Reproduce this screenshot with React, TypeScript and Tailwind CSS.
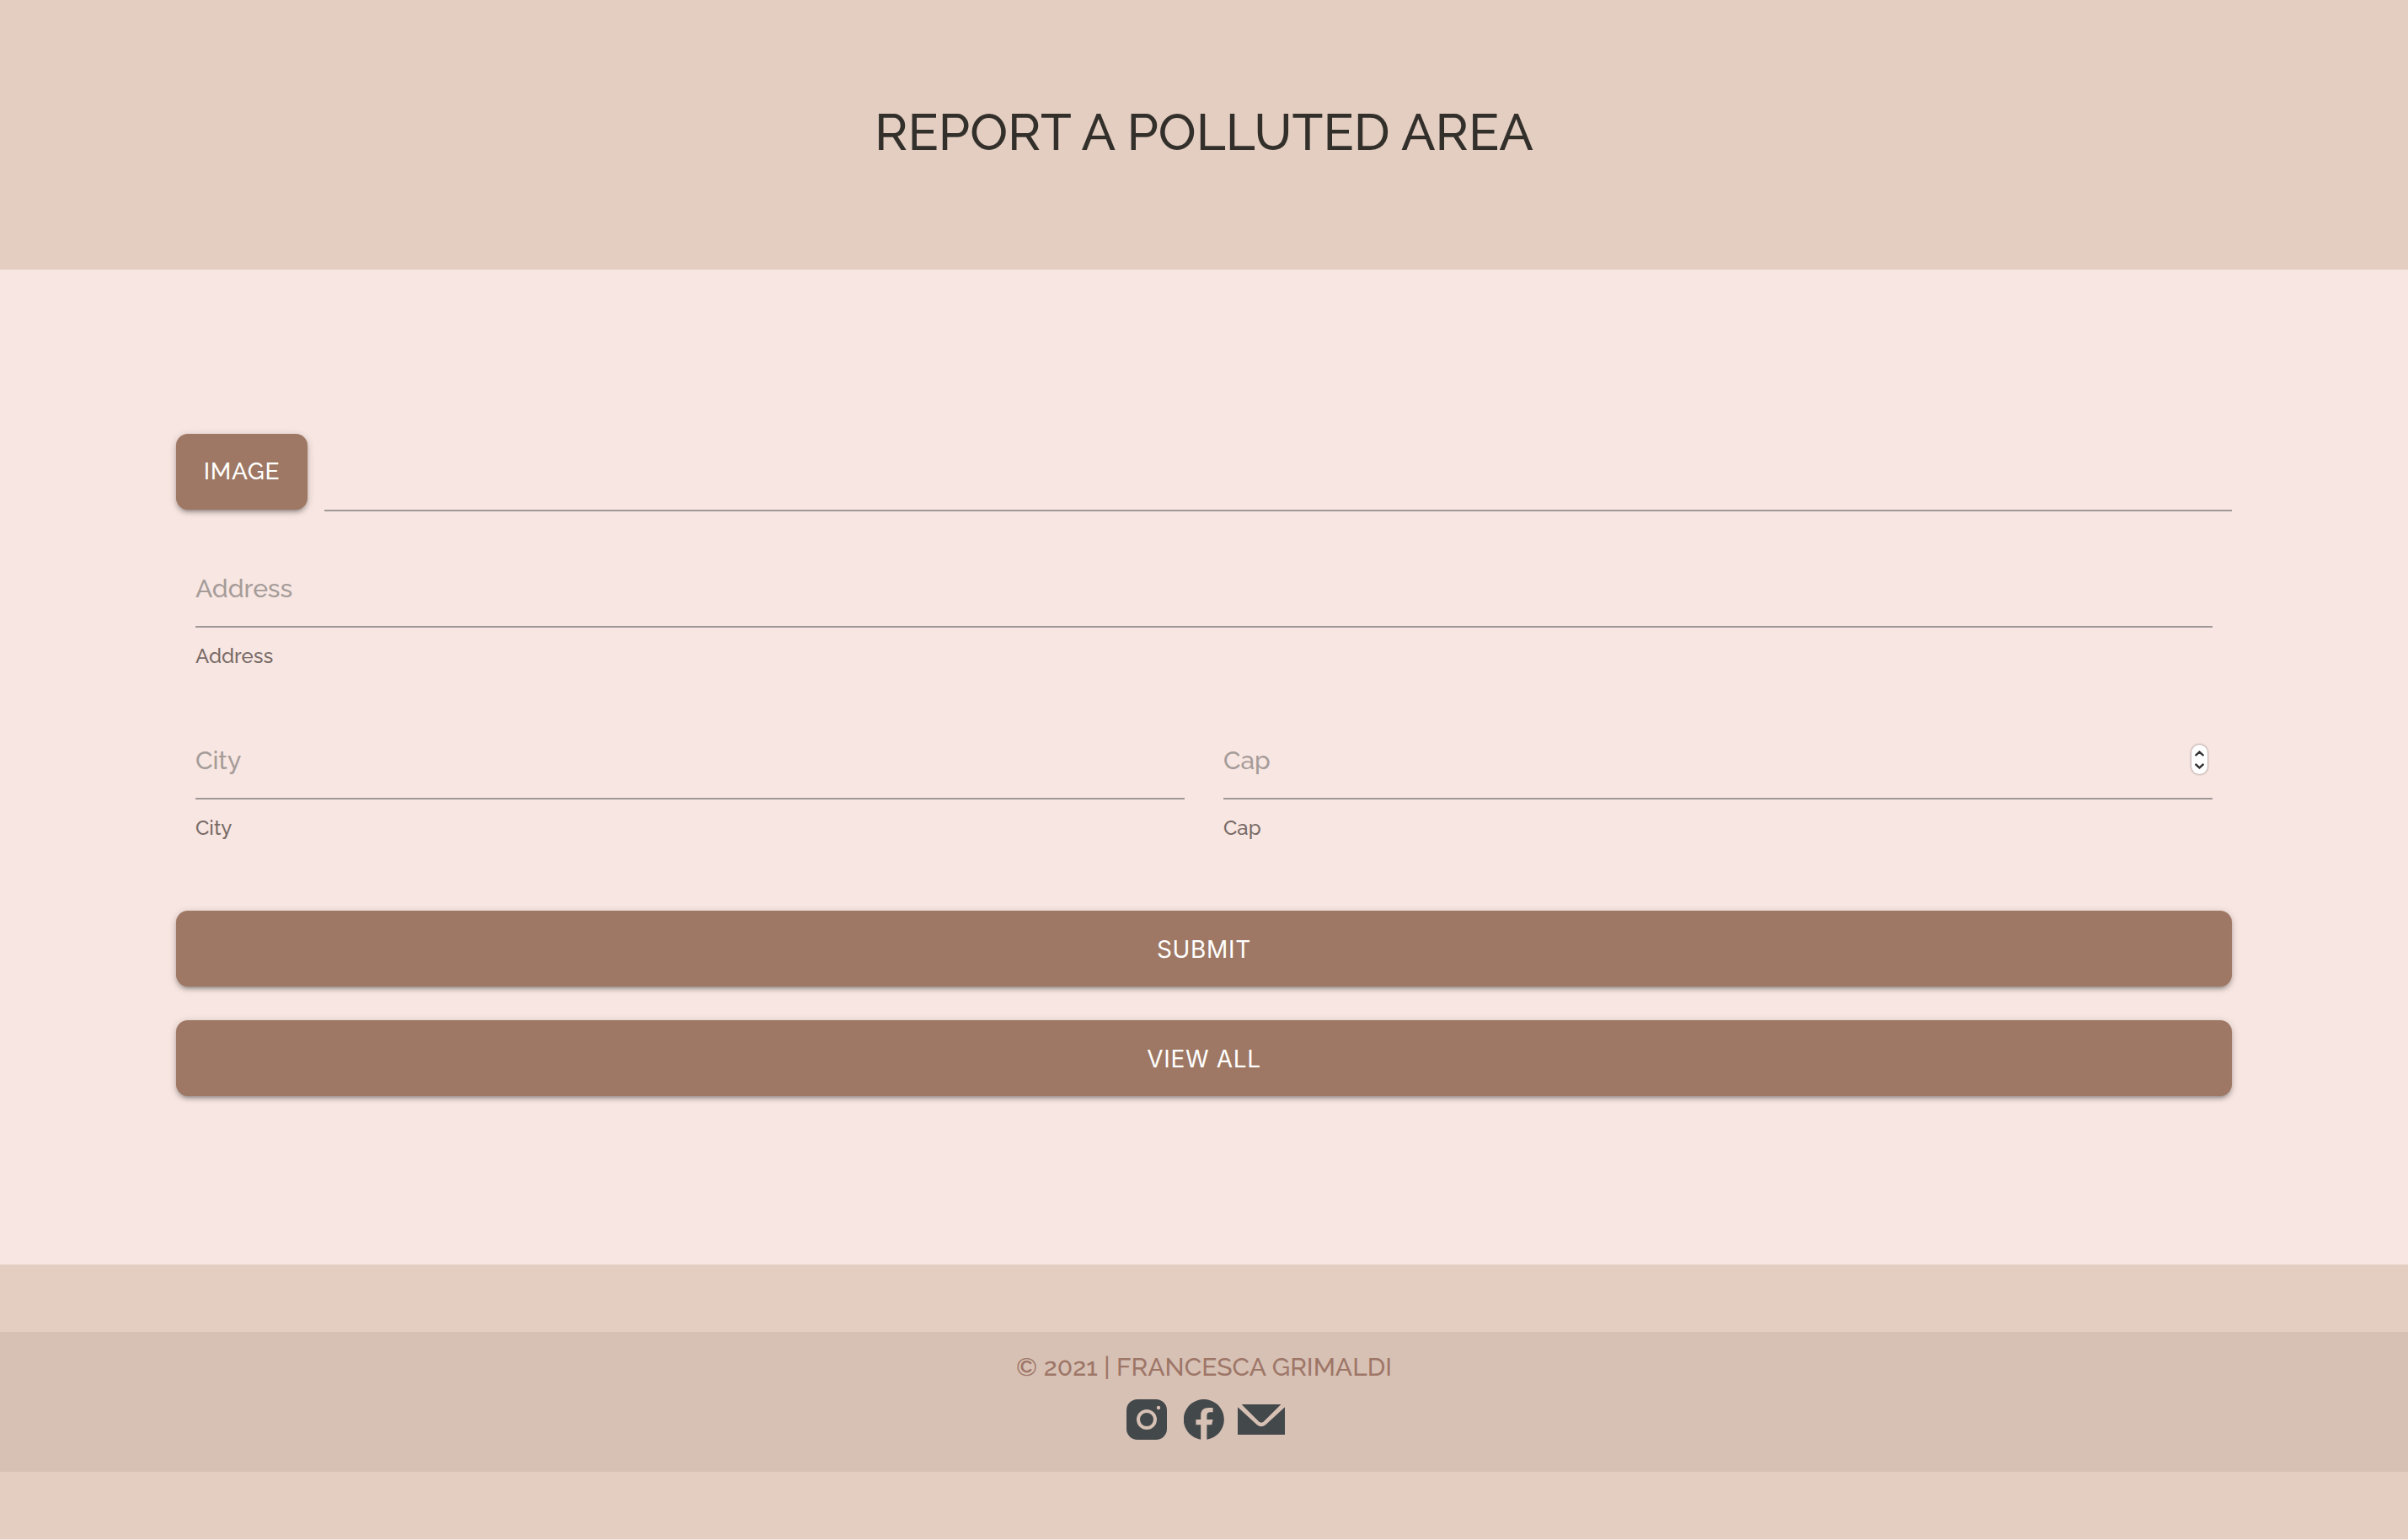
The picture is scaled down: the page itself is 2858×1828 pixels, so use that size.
import { useRef, useState } from "react";

const BUTTON =
  "h-[90px] cursor-pointer rounded-[14px] bg-[#9e7864] text-[28px] leading-9 tracking-wide text-white shadow-[0_4px_4px_rgba(0,0,0,0.14),0_6px_2px_-4px_rgba(0,0,0,0.12),0_2px_10px_rgba(0,0,0,0.2)]";

const INPUT =
  "h-[98px] w-full min-w-0 appearance-none rounded-none border-b-2 border-[#a09896] bg-transparent pt-1.5 text-[30px] leading-10 font-medium text-[#333] outline-none [appearance:textfield] placeholder:text-[#a59c99] placeholder:opacity-100 [&::-webkit-inner-spin-button]:appearance-none";

const HELPER = "mt-4 block text-2xl leading-9 font-medium text-[#786b67]";

function TextField({ id, label }: { id: string; label: string }) {
  return (
    <div className="px-[23px] pb-[54px]">
      <input id={id} type="text" placeholder={label} className={INPUT} />
      <label htmlFor={id} className={HELPER}>
        {label}
      </label>
    </div>
  );
}

function CapField() {
  const input = useRef<HTMLInputElement>(null);
  return (
    <div className="px-[23px] pb-[54px]">
      <div className="relative">
        <input ref={input} id="cap" type="number" placeholder="Cap" className={INPUT} />
        <div className="absolute top-[33px] right-1.5 flex h-[35px] w-[19px] flex-col overflow-hidden rounded-full bg-white shadow-[0_0_2px_1px_rgba(0,0,0,0.25)]">
          <button
            type="button"
            aria-label="Increase cap"
            className="flex flex-1 items-end justify-center pb-1"
            onClick={() => input.current?.stepUp()}
          >
            <svg width="11" height="7" viewBox="0 0 11 7" fill="none" stroke="#333" strokeWidth="2.4" strokeLinecap="round">
              <path d="M1.3 5.3 5.5 1.5 9.7 5.3" />
            </svg>
          </button>
          <button
            type="button"
            aria-label="Decrease cap"
            className="flex flex-1 items-start justify-center pt-1"
            onClick={() => input.current?.stepDown()}
          >
            <svg width="11" height="7" viewBox="0 0 11 7" fill="none" stroke="#333" strokeWidth="2.4" strokeLinecap="round">
              <path d="M1.3 1.5 5.5 5.3 9.7 1.5" />
            </svg>
          </button>
        </div>
      </div>
      <label htmlFor="cap" className={HELPER}>
        Cap
      </label>
    </div>
  );
}

function ImageField() {
  const file = useRef<HTMLInputElement>(null);
  const [name, setName] = useState("");
  return (
    <div className="flex items-end gap-5">
      <button type="button" className={`${BUTTON} mb-0.5 w-[156px] shrink-0 font-medium`} onClick={() => file.current?.click()}>
        IMAGE
      </button>
      <input
        ref={file}
        type="file"
        aria-label="Image file"
        className="hidden"
        onChange={(e) => setName(e.target.files?.[0]?.name ?? "")}
      />
      <input type="text" aria-label="Image file name" readOnly value={name} className={INPUT} />
    </div>
  );
}

function SocialLinks() {
  return (
    <div className="mt-4 flex items-center justify-center pl-1 text-[#43484a]">
      <a href="#instagram" aria-label="Instagram">
        <svg width="48" height="48" viewBox="0 0 48 48">
          <rect width="48" height="48" rx="13" fill="currentColor" />
          <circle cx="24" cy="24" r="10" fill="none" stroke="#d7c1b5" strokeWidth="4" />
          <circle cx="38" cy="10" r="2.2" fill="#d7c1b5" />
        </svg>
      </a>
      <a href="#facebook" aria-label="Facebook" className="ml-5">
        <svg width="48" height="48" viewBox="0 0 48 48" fill="currentColor">
          <path d="M20.2 47.7A24 24 0 1 1 27.4 47.7V30.2H33.2L34.6 24H27.4V19.6C27.4 16.6 28.6 15.2 31.4 15.2H34.6V10H29.4C23.6 10 20.2 13.2 20.2 18.8V24H14.4V30.2H20.2Z" />
        </svg>
      </a>
      <a href="#mail" aria-label="Mail" className="ml-4">
        <svg width="56" height="36" viewBox="0 0 56 36" fill="currentColor">
          <path d="M4.6 0H51.4L31 20.3Q28 23.2 25 20.3Z" />
          <path d="M0 3.2 22.6 24Q28 28.6 33.4 24L56 3.2V36H0Z" />
        </svg>
      </a>
    </div>
  );
}

export default function App() {
  return (
    <div className="min-h-screen bg-[#f8e6e2] font-['Raleway','Lato',sans-serif]">
      <header className="flex h-80 justify-center bg-[#e4cec1] pt-[117px]">
        <h1 className="text-6xl leading-20 font-medium text-[#33302c]">REPORT A POLLUTED AREA</h1>
      </header>

      <main className="px-6 pt-[189px] pb-50">
        <form className="mx-auto max-w-[2440px]" onSubmit={(e) => e.preventDefault()}>
          <ImageField />
          <div className="mt-10">
            <TextField id="address" label="Address" />
          </div>
          <div className="grid grid-cols-2">
            <TextField id="city" label="City" />
            <CapField />
          </div>
          <div className="mt-[26px] flex flex-col gap-10 font-['Inter',sans-serif]">
            <button type="submit" className={`${BUTTON} pt-0.5`}>
              SUBMIT
            </button>
            <button type="button" className={`${BUTTON} pt-0.5`}>
              VIEW ALL
            </button>
          </div>
        </form>
      </main>

      <footer className="bg-[#e4cec1] py-20">
        <div className="bg-[#d7c1b5] pt-5 pb-[38px] text-center">
          <p className="text-[30px] leading-11 font-medium text-[#9e7667]">© 2021 | FRANCESCA GRIMALDI</p>
          <SocialLinks />
        </div>
      </footer>
    </div>
  );
}
